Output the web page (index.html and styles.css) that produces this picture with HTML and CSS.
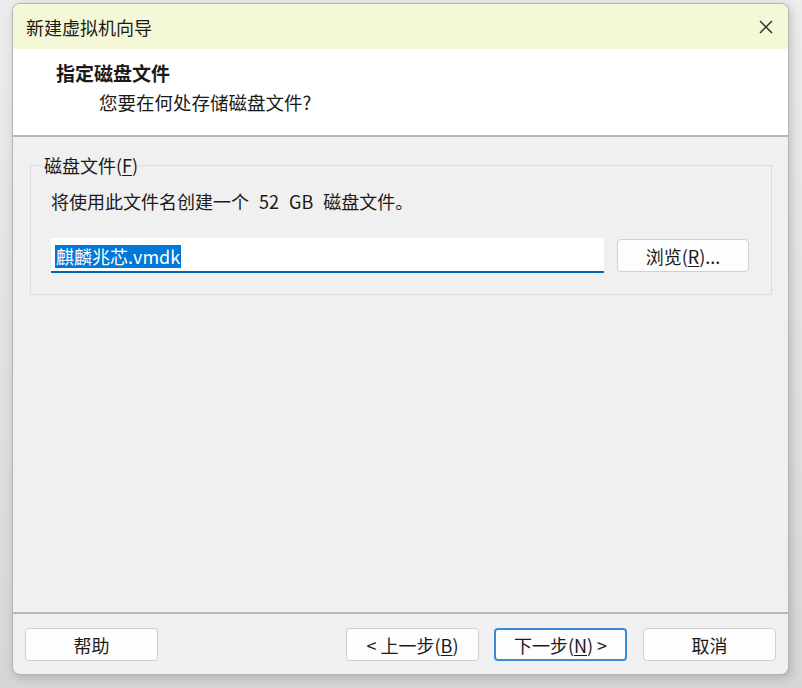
FILE: index.html
```html
<!DOCTYPE html>
<html lang="zh-CN">
<head>
<meta charset="utf-8">
<title>新建虚拟机向导</title>
<link rel="stylesheet" href="styles.css">
</head>
<body>
<div class="window">
  <div class="titlebar">
    <span class="title">新建虚拟机向导</span>
    <span class="close" aria-label="关闭">
      <svg width="16" height="16" viewBox="0 0 16 16"><path d="M2 2 L14 14 M14 2 L2 14" stroke="#2b2b2b" stroke-width="1.4" fill="none"/></svg>
    </span>
  </div>
  <div class="header">
    <div class="h-title">指定磁盘文件</div>
    <div class="h-sub">您要在何处存储磁盘文件?</div>
  </div>
  <div class="content">
    <fieldset class="group">
      <legend class="legend">磁盘文件(<u>F</u>)</legend>
      <div class="desc">将使用此文件名创建一个 52 GB 磁盘文件。</div>
      <div class="filerow">
        <div class="input"><span class="sel">麒麟兆芯.vmdk</span></div>
        <button class="btn browse">浏览(<u>R</u>)...</button>
      </div>
    </fieldset>
  </div>
  <div class="footer">
    <button class="btn">帮助</button>
    <div class="spacer"></div>
    <button class="btn">&lt; 上一步(<u>B</u>)</button>
    <button class="btn primary">下一步(<u>N</u>) &gt;</button>
    <button class="btn">取消</button>
  </div>
</div>
</body>
</html>
```

FILE: styles.css
```css
* { box-sizing: border-box; }
html, body { margin: 0; padding: 0; }
body {
  width: 802px;
  height: 688px;
  overflow: hidden;
  background: linear-gradient(#ececec, #d6d6d6);
  font-family: "Noto Sans CJK SC", "Noto Sans", sans-serif;
  font-size: 18px;
  color: #1a1a1a;
  padding: 3px 0 0 12px;
}
.window {
  width: 777px;
  height: 672px;
  border: 1px solid #b4b4b4;
  border-radius: 8px;
  background: #f0f0f0;
  overflow: hidden;
  display: flex;
  flex-direction: column;
  box-shadow: 2px 3px 10px rgba(0,0,0,0.18);
}
.titlebar {
  height: 45px;
  flex: none;
  background: #f4f8d7;
  display: flex;
  align-items: center;
  justify-content: space-between;
  padding: 0 13px 0 13px;
}
.title { font-size: 18px; line-height: 24px; color: #1a1a1a; }
.close { display: flex; width: 16px; height: 16px; margin-right: 1px; }
.header {
  height: 88px;
  flex: none;
  background: #ffffff;
  padding: 12px 0 0 43px;
  border-bottom: 2px solid #b8b8b8;
}
.h-title { font-size: 19px; font-weight: bold; line-height: 24px; }
.h-sub { margin: 5px 0 0 43px; font-size: 18.5px; line-height: 24px; }
.content {
  flex: 1;
  padding: 16px 16px 0 17px;
}
.group {
  margin: 0;
  border: 1px solid #dcdcdc;
  padding: 12px 22px 21px 20px;
}
.legend {
  padding: 0 1px;
  margin-left: -8px;
  line-height: 24px;
  font-size: 18px;
}
.desc { line-height: 24px; word-spacing: 6px; }
.filerow {
  display: flex;
  gap: 13px;
  margin-top: 25px;
  align-items: flex-start;
}
.input {
  flex: 1;
  height: 35px;
  background: #ffffff;
  border-bottom: 2px solid #0067c0;
  padding: 5px 0 0 4px;
}
.sel {
  display: inline-block;
  background: #0078d7;
  color: #ffffff;
  line-height: 23px;
  height: 23px;
  padding: 0 1px;
}
.btn {
  font-family: "Noto Sans CJK SC", "Noto Sans", sans-serif;
  font-size: 18px;
  color: #1a1a1a;
  width: 133px;
  height: 33px;
  background: #fdfdfd;
  border: 1px solid #d0d0d0;
  border-radius: 4px;
  padding: 0;
  line-height: 24px;
}
.browse { width: 132px; margin-top: 1px; }
u { text-decoration-thickness: 1px; text-underline-offset: 2px; }
.footer {
  flex: none;
  height: 62px;
  border-top: 2px solid #b8b8b8;
  display: flex;
  align-items: flex-start;
  padding: 14px 12px 0 12px;
}
.spacer { flex: 1; }
.footer .btn + .btn { margin-left: 15px; }
.footer .primary + .btn { margin-left: 16px; }
.primary {
  border: 2px solid #3a8ad6;
}
```
